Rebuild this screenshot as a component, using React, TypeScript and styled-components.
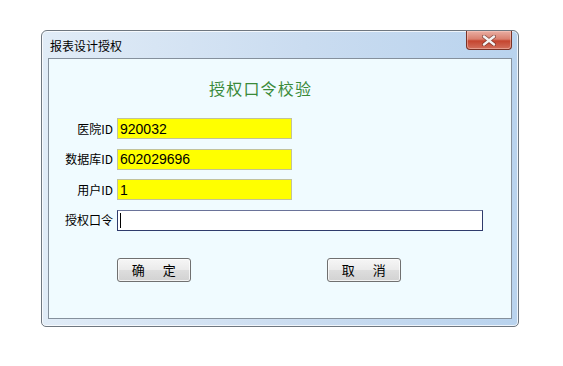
import React from "react";
import styled, { createGlobalStyle } from "styled-components";

const GlobalStyle = createGlobalStyle`
  html, body {
    margin: 0;
    padding: 0;
    background: #ffffff;
  }
  body {
    font-family: "Noto Sans CJK SC", "DejaVu Sans", sans-serif;
  }
`;

const Desktop = styled.div`
  width: 563px;
  height: 366px;
  padding: 30px 0 0 41px;
  box-sizing: border-box;
`;

const Window = styled.div`
  width: 478px;
  height: 297px;
  box-sizing: border-box;
  display: flex;
  flex-direction: column;
  padding: 0 6px 7px 6px;
  border: 1px solid #6f7780;
  border-radius: 6px 6px 5px 5px;
  background: linear-gradient(to right, #e1ecf7 0%, #cadcf0 55%, #b9d3ee 100%);
  box-shadow: inset 0 0 0 1px rgba(255, 255, 255, 0.75);
`;

const TitleBar = styled.div`
  height: 27px;
  display: flex;
  align-items: flex-start;
  justify-content: space-between;
`;

const TitleText = styled.span`
  font-size: 12px;
  line-height: 12px;
  color: #000;
  padding: 9px 0 0 2px;
`;

const CloseButton = styled.button`
  width: 46px;
  height: 19px;
  padding: 0;
  display: flex;
  align-items: center;
  justify-content: center;
  border: 1px solid #7a3226;
  border-top: none;
  border-radius: 0 0 4px 4px;
  background: linear-gradient(
    to bottom,
    #e9aea3 0%,
    #d9806f 45%,
    #c5452f 55%,
    #d2705d 100%
  );
  box-shadow: inset 0 0 0 1px rgba(255, 210, 200, 0.45);
`;

const Client = styled.div`
  flex: 1;
  border: 1px solid #85909c;
  background: #f0fbff;
  display: flex;
  flex-direction: column;
`;

const Heading = styled.div`
  margin: 20px 0 0 160px;
  font-size: 16px;
  line-height: 18px;
  color: #3a8a3a;
  letter-spacing: 1.2px;
`;

const Form = styled.div`
  margin-top: 21px;
  display: grid;
  grid-template-columns: 64px auto;
  column-gap: 4px;
  row-gap: 9.5px;
  align-items: center;
  justify-items: start;
`;

const Label = styled.label`
  justify-self: end;
  font-size: 12px;
  line-height: 14px;
  color: #000;
  white-space: nowrap;
`;

const Field = styled.div<{ $width: number; $tone: "yellow" | "white" }>`
  width: ${p => p.$width}px;
  height: 21px;
  box-sizing: border-box;
  display: flex;
  align-items: center;
  padding-left: 2px;
  font-family: "Liberation Sans", Arial, sans-serif;
  font-size: 14px;
  color: #000;
  background: ${p => (p.$tone === "yellow" ? "#ffff00" : "#ffffff")};
  border: 1px solid ${p => (p.$tone === "yellow" ? "#c2c29a" : "#2f3b6c")};
  border-top-color: ${p => (p.$tone === "yellow" ? "#c2c29a" : "#6a7399")};
`;

const Caret = styled.span`
  width: 1px;
  height: 15px;
  background: #000;
`;

const ButtonRow = styled.div`
  margin: 27px 0 0 68px;
  display: flex;
  gap: 136px;
`;

const PushButton = styled.button`
  width: 74px;
  height: 24px;
  padding: 0 0 0 2px;
  box-sizing: border-box;
  border: 1px solid #707070;
  border-radius: 3px;
  background: linear-gradient(to bottom, #f6f6f6 0%, #ebebeb 48%, #dddddd 52%, #d2d2d2 100%);
  box-shadow: inset 0 0 0 1px rgba(255, 255, 255, 0.7);
  font-family: "Noto Sans CJK SC", sans-serif;
  font-size: 13px;
  letter-spacing: 2.5px;
  white-space: pre;
  color: #000;
`;

const CloseGlyph = () => (
  <svg width="14" height="11" viewBox="0 0 14 11">
    <path
      d="M2 1.5 L12 9.5 M12 1.5 L2 9.5"
      stroke="#4a1e18"
      strokeWidth="4"
      strokeLinecap="round"
      opacity="0.55"
    />
    <path
      d="M2 1.5 L12 9.5 M12 1.5 L2 9.5"
      stroke="#f4f4f4"
      strokeWidth="2.4"
      strokeLinecap="round"
    />
  </svg>
);

const rows = [
  { label: "医院ID", value: "920032" },
  { label: "数据库ID", value: "602029696" },
  { label: "用户ID", value: "1" }
];

export default function App() {
  return (
    <>
      <GlobalStyle />
      <Desktop>
        <Window>
          <TitleBar>
            <TitleText>报表设计授权</TitleText>
            <CloseButton type="button" aria-label="关闭">
              <CloseGlyph />
            </CloseButton>
          </TitleBar>
          <Client>
            <Heading>授权口令校验</Heading>
            <Form>
              {rows.map(row => (
                <React.Fragment key={row.label}>
                  <Label>{row.label}</Label>
                  <Field $width={175} $tone="yellow">
                    {row.value}
                  </Field>
                </React.Fragment>
              ))}
              <Label>授权口令</Label>
              <Field $width={366} $tone="white">
                <Caret />
              </Field>
            </Form>
            <ButtonRow>
              <PushButton type="button">{"确　定"}</PushButton>
              <PushButton type="button">{"取　消"}</PushButton>
            </ButtonRow>
          </Client>
        </Window>
      </Desktop>
    </>
  );
}
